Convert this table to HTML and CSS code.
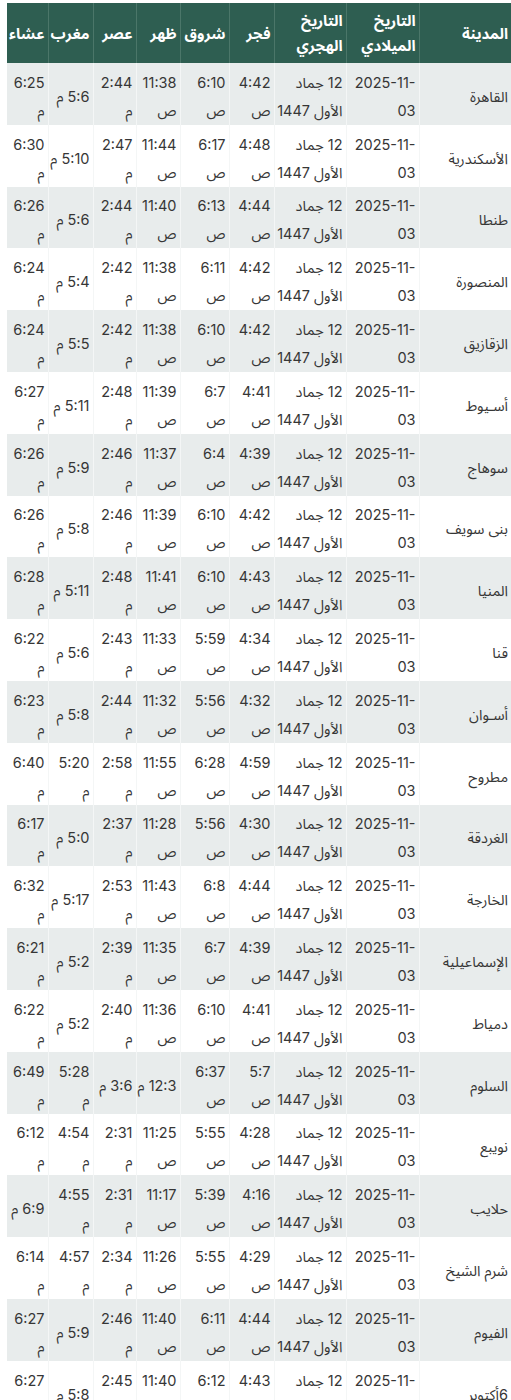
FILE: index.html
```html
<!DOCTYPE html>
<html lang="ar" dir="rtl">
<head>
<meta charset="utf-8">
<title>مواقيت الصلاة</title>
<link rel="stylesheet" href="styles.css">
</head>
<body>
<div class="wrap">
<table class="prayer">
<colgroup>
<col class="c-city"><col class="c-greg"><col class="c-hijri"><col class="c-fajr"><col class="c-shuruq"><col class="c-dhuhr"><col class="c-asr"><col class="c-maghrib"><col class="c-isha">
</colgroup>
<thead>
<tr><th>المدينة</th><th>التاريخ الميلادي</th><th>التاريخ الهجري</th><th>فجر</th><th>شروق</th><th>ظهر</th><th>عصر</th><th>مغرب</th><th>عشاء</th></tr>
</thead>
<tbody>
<tr><td>القاهرة</td><td><span class="ymd">2025-11-</span><br>03</td><td>12 جماد<br>الأول 1447</td><td>4:42<br>ص</td><td>6:10<br>ص</td><td>11:38<br>ص</td><td>2:44<br>م</td><td>5:6 م</td><td>6:25<br>م</td></tr>
<tr><td>الأسكندرية</td><td><span class="ymd">2025-11-</span><br>03</td><td>12 جماد<br>الأول 1447</td><td>4:48<br>ص</td><td>6:17<br>ص</td><td>11:44<br>ص</td><td>2:47<br>م</td><td>5:10 م</td><td>6:30<br>م</td></tr>
<tr><td>طنطا</td><td><span class="ymd">2025-11-</span><br>03</td><td>12 جماد<br>الأول 1447</td><td>4:44<br>ص</td><td>6:13<br>ص</td><td>11:40<br>ص</td><td>2:44<br>م</td><td>5:6 م</td><td>6:26<br>م</td></tr>
<tr><td>المنصورة</td><td><span class="ymd">2025-11-</span><br>03</td><td>12 جماد<br>الأول 1447</td><td>4:42<br>ص</td><td>6:11<br>ص</td><td>11:38<br>ص</td><td>2:42<br>م</td><td>5:4 م</td><td>6:24<br>م</td></tr>
<tr><td>الزقازيق</td><td><span class="ymd">2025-11-</span><br>03</td><td>12 جماد<br>الأول 1447</td><td>4:42<br>ص</td><td>6:10<br>ص</td><td>11:38<br>ص</td><td>2:42<br>م</td><td>5:5 م</td><td>6:24<br>م</td></tr>
<tr><td>أسـيوط</td><td><span class="ymd">2025-11-</span><br>03</td><td>12 جماد<br>الأول 1447</td><td>4:41<br>ص</td><td>6:7<br>ص</td><td>11:39<br>ص</td><td>2:48<br>م</td><td>5:11 م</td><td>6:27<br>م</td></tr>
<tr><td>سوهاج</td><td><span class="ymd">2025-11-</span><br>03</td><td>12 جماد<br>الأول 1447</td><td>4:39<br>ص</td><td>6:4<br>ص</td><td>11:37<br>ص</td><td>2:46<br>م</td><td>5:9 م</td><td>6:26<br>م</td></tr>
<tr><td>بنى سويف</td><td><span class="ymd">2025-11-</span><br>03</td><td>12 جماد<br>الأول 1447</td><td>4:42<br>ص</td><td>6:10<br>ص</td><td>11:39<br>ص</td><td>2:46<br>م</td><td>5:8 م</td><td>6:26<br>م</td></tr>
<tr><td>المنيا</td><td><span class="ymd">2025-11-</span><br>03</td><td>12 جماد<br>الأول 1447</td><td>4:43<br>ص</td><td>6:10<br>ص</td><td>11:41<br>ص</td><td>2:48<br>م</td><td>5:11 م</td><td>6:28<br>م</td></tr>
<tr><td>قنا</td><td><span class="ymd">2025-11-</span><br>03</td><td>12 جماد<br>الأول 1447</td><td>4:34<br>ص</td><td>5:59<br>ص</td><td>11:33<br>ص</td><td>2:43<br>م</td><td>5:6 م</td><td>6:22<br>م</td></tr>
<tr><td>أسـوان</td><td><span class="ymd">2025-11-</span><br>03</td><td>12 جماد<br>الأول 1447</td><td>4:32<br>ص</td><td>5:56<br>ص</td><td>11:32<br>ص</td><td>2:44<br>م</td><td>5:8 م</td><td>6:23<br>م</td></tr>
<tr><td>مطروح</td><td><span class="ymd">2025-11-</span><br>03</td><td>12 جماد<br>الأول 1447</td><td>4:59<br>ص</td><td>6:28<br>ص</td><td>11:55<br>ص</td><td>2:58<br>م</td><td>5:20<br>م</td><td>6:40<br>م</td></tr>
<tr><td>الغردقة</td><td><span class="ymd">2025-11-</span><br>03</td><td>12 جماد<br>الأول 1447</td><td>4:30<br>ص</td><td>5:56<br>ص</td><td>11:28<br>ص</td><td>2:37<br>م</td><td>5:0 م</td><td>6:17<br>م</td></tr>
<tr><td>الخارجة</td><td><span class="ymd">2025-11-</span><br>03</td><td>12 جماد<br>الأول 1447</td><td>4:44<br>ص</td><td>6:8<br>ص</td><td>11:43<br>ص</td><td>2:53<br>م</td><td>5:17 م</td><td>6:32<br>م</td></tr>
<tr><td>الإسماعيلية</td><td><span class="ymd">2025-11-</span><br>03</td><td>12 جماد<br>الأول 1447</td><td>4:39<br>ص</td><td>6:7<br>ص</td><td>11:35<br>ص</td><td>2:39<br>م</td><td>5:2 م</td><td>6:21<br>م</td></tr>
<tr><td>دمياط</td><td><span class="ymd">2025-11-</span><br>03</td><td>12 جماد<br>الأول 1447</td><td>4:41<br>ص</td><td>6:10<br>ص</td><td>11:36<br>ص</td><td>2:40<br>م</td><td>5:2 م</td><td>6:22<br>م</td></tr>
<tr><td>السلوم</td><td><span class="ymd">2025-11-</span><br>03</td><td>12 جماد<br>الأول 1447</td><td>5:7<br>ص</td><td>6:37<br>ص</td><td>12:3 م</td><td>3:6 م</td><td>5:28<br>م</td><td>6:49<br>م</td></tr>
<tr><td>نويبع</td><td><span class="ymd">2025-11-</span><br>03</td><td>12 جماد<br>الأول 1447</td><td>4:28<br>ص</td><td>5:55<br>ص</td><td>11:25<br>ص</td><td>2:31<br>م</td><td>4:54<br>م</td><td>6:12<br>م</td></tr>
<tr><td>حلايب</td><td><span class="ymd">2025-11-</span><br>03</td><td>12 جماد<br>الأول 1447</td><td>4:16<br>ص</td><td>5:39<br>ص</td><td>11:17<br>ص</td><td>2:31<br>م</td><td>4:55<br>م</td><td>6:9 م</td></tr>
<tr><td>شرم الشيخ</td><td><span class="ymd">2025-11-</span><br>03</td><td>12 جماد<br>الأول 1447</td><td>4:29<br>ص</td><td>5:55<br>ص</td><td>11:26<br>ص</td><td>2:34<br>م</td><td>4:57<br>م</td><td>6:14<br>م</td></tr>
<tr><td>الفيوم</td><td><span class="ymd">2025-11-</span><br>03</td><td>12 جماد<br>الأول 1447</td><td>4:44<br>ص</td><td>6:11<br>ص</td><td>11:40<br>ص</td><td>2:46<br>م</td><td>5:9 م</td><td>6:27<br>م</td></tr>
<tr><td>6أكتوبر</td><td><span class="ymd">2025-11-</span><br>03</td><td>12 جماد<br>الأول 1447</td><td>4:43<br>ص</td><td>6:12<br>ص</td><td>11:40<br>ص</td><td>2:45<br>م</td><td>5:8 م</td><td>6:27<br>م</td></tr>
</tbody>
</table>
</div>
</body>
</html>
```

FILE: styles.css
```css
html, body {
  margin: 0;
  padding: 0;
  background: #ffffff;
}

body {
  font-family: "Inter", "Noto Sans Arabic", "DejaVu Sans", sans-serif;
  color: #363636;
  font-size: 14.5px;
}

.wrap {
  padding-top: 3px;
  width: 504px;
}

.prayer {
  width: 504px;
  border-collapse: collapse;
  table-layout: fixed;
}

.c-city { width: 92px; }
.c-greg { width: 73px; }
.c-hijri { width: 72px; }
.c-fajr { width: 45px; }
.c-shuruq { width: 49px; }
.c-dhuhr { width: 44px; }
.c-asr { width: 43px; }
.c-maghrib { width: 45px; }
.c-isha { width: 41px; }

.prayer th {
  background: #2e5e51;
  color: #ffffff;
  font-weight: 700;
  font-size: 15px;
  text-align: right;
  line-height: 25px;
  height: 50px;
  padding: 5px 3px;
  border-left: 1px solid #4b7669;
  vertical-align: middle;
}

.prayer th:last-child,
.prayer td:last-child {
  border-left: none;
}

.prayer td {
  text-align: right;
  line-height: 28px;
  height: 56px;
  padding: 5.8px 3px 0;
  vertical-align: middle;
  border-left: 1px solid #f4f6f6;
  white-space: nowrap;
}

.prayer tbody tr:nth-child(odd) td {
  background: #e8ecec;
}

.ymd {
  direction: ltr;
  unicode-bidi: isolate;
}
```
